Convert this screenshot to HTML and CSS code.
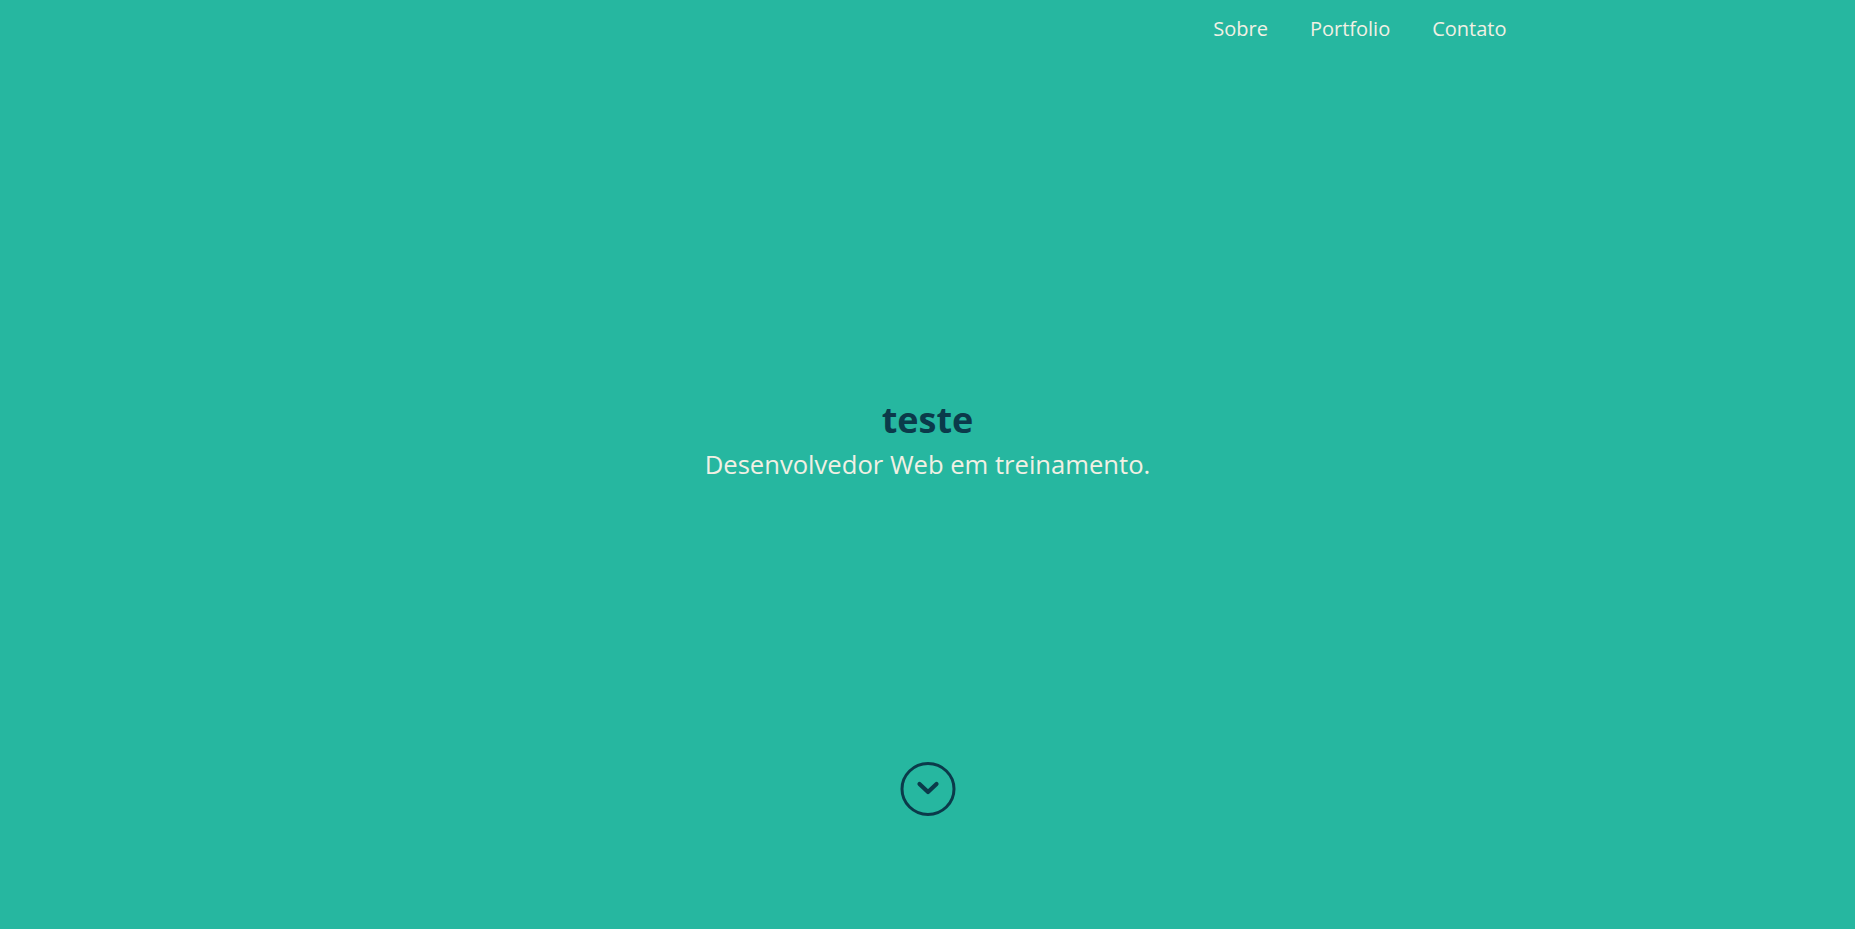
FILE: index.html
```html
<!DOCTYPE html>
<html lang="pt-br">
<head>
<meta charset="utf-8">
<title>teste</title>
<link rel="stylesheet" href="styles.css">
</head>
<body>
<div class="page">
  <header class="header">
    <nav class="nav">
      <a href="#sobre" class="nav-link">Sobre</a>
      <a href="#portfolio" class="nav-link">Portfolio</a>
      <a href="#contato" class="nav-link">Contato</a>
    </nav>
  </header>
  <main class="hero">
    <div class="hero-text">
      <h1 class="hero-title">teste</h1>
      <p class="hero-subtitle">Desenvolvedor Web em treinamento.</p>
    </div>
    <a href="#sobre" class="scroll-down" aria-label="Rolar para baixo">
      <svg width="56" height="56" viewBox="0 0 56 56">
        <ellipse cx="28" cy="28" rx="26" ry="25.5" fill="none" stroke="#0b3a4a" stroke-width="3"/>
        <polyline points="19.5,23 28,31 36.5,23" fill="none" stroke="#0b3a4a" stroke-width="4.2" stroke-linecap="round" stroke-linejoin="round"/>
      </svg>
    </a>
  </main>
</div>
</body>
</html>
```
FILE: styles.css
```css
* { box-sizing: border-box; }
html, body { margin: 0; padding: 0; }
body {
  background: #26b7a0;
  font-family: "Open Sans", "Noto Sans", sans-serif;
  color: #f1f0e4;
}
.page {
  height: 929px;
  display: flex;
  flex-direction: column;
}
.header {
  width: 1200px;
  margin: 0 auto;
  height: 56px;
  padding-top: 2px;
  display: flex;
  justify-content: flex-end;
  align-items: center;
}
.nav { display: flex; }
.nav-link {
  color: #f1f0e4;
  text-decoration: none;
  font-size: 20px;
  padding: 0 21px;
  line-height: 28px;
}
.hero {
  flex: 1;
  display: flex;
  flex-direction: column;
  align-items: center;
  padding-top: 340px;
}
.hero-text { text-align: center; }
.hero-title {
  margin: 0;
  font-size: 36px;
  font-weight: 700;
  color: #0b3a4a;
  line-height: 48px;
}
.hero-subtitle {
  margin: 0;
  font-size: 25.6px;
  line-height: 42px;
}
.scroll-down {
  display: block;
  margin-top: 275px;
  width: 56px;
  height: 56px;
}
.scroll-down svg { display: block; }
```
